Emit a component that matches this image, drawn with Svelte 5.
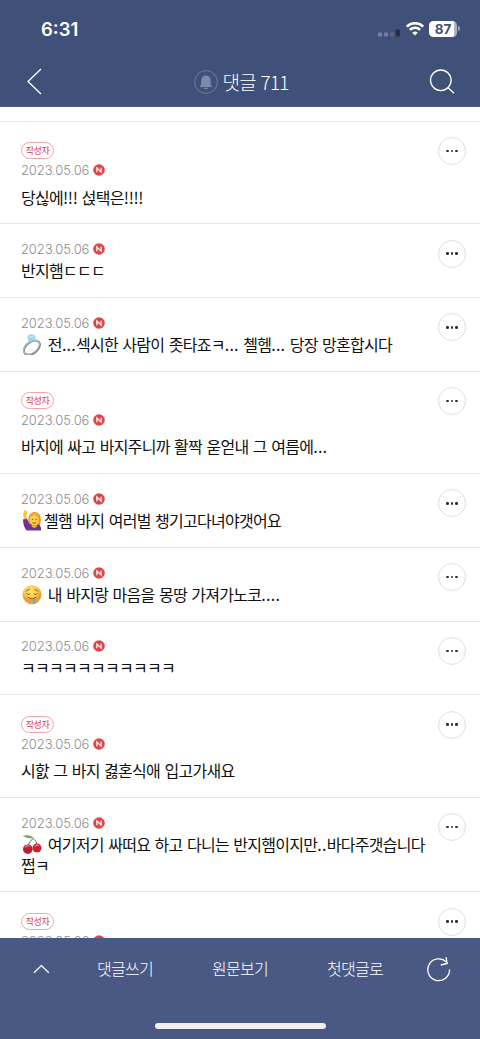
<script>
  const comments = [
    { author: true, text: '당싢에!!! 섡택은!!!!' },
    { text: '반지햄ㄷㄷㄷ' },
    { emoji: 'ring', text: ' 전...섹시한 사람이 좃타죠ㅋ... 첼헴... 당장 망혼합시다' },
    { author: true, text: '바지에 싸고 바지주니까 활짝 욷얻내 그 여름에...' },
    { emoji: 'woman', text: '첼햄 바지 여러벌 챙기고다녀야갯어요' },
    { emoji: 'drool', text: ' 내 바지랑 마음을 몽땅 가져가노코....' },
    { text: 'ㅋㅋㅋㅋㅋㅋㅋㅋㅋㅋㅋ' },
    { author: true, text: '시핤 그 바지 겷혼식애 입고가새요' },
    { emoji: 'cherry', text: ' 여기저기 싸떠요 하고 다니는 반지햄이지만..바다주갯습니다', more: '쩝ㅋ' },
    { author: true, text: '' }
  ];
  // Punctuation runs are set looser than the Hangul around them.
  const runs = (text) => text.split(/([.]+|!+)/).filter(Boolean);
</script>

<div class="screen">
  <header>
    <div class="status">
      <span class="time">6:31</span>
      <div class="indicators">
        <svg class="signal" width="22" height="8" viewBox="0 0 22 8">
          <rect x="0" y="3.5" width="4" height="4" rx="1" fill="#7381a4" />
          <rect x="6" y="3.5" width="4" height="4" rx="1" fill="#7381a4" />
          <rect x="12" y="3" width="4" height="4.5" rx="1" fill="#5c6580" />
          <rect x="17.8" y="0.5" width="4" height="7" rx="1" fill="#252b3d" />
        </svg>
        <svg class="wifi" width="18" height="14" viewBox="0 0 18 14" fill="none" stroke="#fff">
          <path d="M.8 4.6C5.5.1 12.5.1 17.2 4.6" stroke-width="2.6" />
          <path d="M3.8 7.8C6.8 5 11.2 5 14.2 7.8" stroke-width="2.4" />
          <path d="M9 13.6 6.2 10.8Q9 8.4 11.8 10.8Z" fill="#fff" stroke="none" />
        </svg>
        <span class="battery"><span>87</span></span>
        <span class="cap"></span>
      </div>
    </div>
    <div class="bar">
      <svg class="back" width="16" height="27" viewBox="0 0 16 27"><path d="M14 1 1 13.5 14 26" /></svg>
      <div class="title">
        <svg width="24" height="24" viewBox="0 0 24 24">
          <circle cx="12" cy="12" r="11.4" fill="none" stroke="#6e7ba0" />
          <path d="M12 5.4c-3 0-4.7 2-4.7 5v4.2L6 16.4v.5h12v-.5l-1.3-1.8v-4.2c0-3-1.7-5-4.7-5ZM9.9 17.7h4.2q-.6 1.5-2.1 1.5t-2.1-1.5Z" fill="#7d89a8" />
        </svg>
        <h1>댓글 711</h1>
      </div>
      <svg class="search" width="26" height="26" viewBox="0 0 26 26"><circle cx="11.8" cy="11.3" r="10.3" /><path d="m18.9 18.6 6.1 5.6" /></svg>
    </div>
  </header>

  <main>
    {#each comments as item}
      <article class:author={item.author} class:tall={item.more}>
        <div class="content">
          {#if item.author}<span class="badge">작성자</span>{/if}
          <div class="meta">
            <time>2023.05.06</time>
            <svg width="12" height="12" viewBox="0 0 12 12"><circle cx="6" cy="6" r="5.8" fill="#df464b" /><path d="M3.9 8.2V3.9L8.1 8.1V3.8" fill="none" stroke="#fff" stroke-width="1.2" /></svg>
          </div>
          <p>
            {#if item.emoji}
              <svg class="emoji" class:tight={item.emoji === 'woman'} width="20" height="21" viewBox="0 0 20 21">
                {#if item.emoji === 'ring'}
                  <ellipse cx="9.9" cy="13.6" rx="9" ry="5.7" transform="rotate(-38 9.9 13.6)" fill="none" stroke="#73787f" stroke-width="2" />
                  <ellipse cx="9.5" cy="13.1" rx="8.9" ry="5.5" transform="rotate(-38 9.5 13.1)" fill="none" stroke="#c2c5c9" stroke-width="1.2" />
                  <path d="m5.5 2.3 2-1.8h4l2 2-.8 3.5-3.2 2.2-3.3-2Z" fill="#8fc8e8" />
                  <path d="m7.5.6 2 2.7-3 2.6M11.5.6l-2 2.7 3 2.6M5.5 2.4l4 .9 4-.8" fill="none" stroke="#d8f3ff" stroke-width=".7" />
                {:else if item.emoji === 'woman'}
                  <path d="M6.5 15C5.5 7 7.5 2 12.5 2c5.6 0 7 5 6 11l-1 4H9Z" fill="#d99a2e" />
                  <path d="M1 9.5 4.6 8l2.6 5.6 4.3 2.2 5-1.4q2.6 1 2.6 6.2H4.8Q1.2 17 1 9.5Z" fill="#78308e" />
                  <path d="M2 9.6 1.2 4.3 2 .8l1-.6.8 1 1.2-.6.4 3.2-1.2 2 .3 3Z" fill="#f8c63b" />
                  <ellipse cx="12.2" cy="10" rx="4.6" ry="5.7" fill="#ffcf45" />
                  <path d="M7.3 10C7.6 6.5 10.5 6.6 13 4.6c.6 2 3 2.4 4 5.4.9-4.4-1-7.2-4.5-7.2-3.7 0-5.8 3-5.2 7.2Z" fill="#e8ad3c" />
                  <path d="M10 9.3h1.2M13.5 9.3h1.2M10.6 12.6q1.7 1.4 3.4 0" fill="none" stroke="#704719" />
                  <path d="M9.6 15v1.6q2.8 2.8 5.4 0V15q-2.7 1.5-5.4 0Z" fill="#e9ae31" />
                {:else if item.emoji === 'drool'}
                  <defs><radialGradient id="face" cx=".45" cy=".3"><stop offset="0" stop-color="#ffe772" /><stop offset=".7" stop-color="#fdc94a" /><stop offset="1" stop-color="#e8a038" /></radialGradient></defs>
                  <circle cx="10" cy="10.8" r="9.5" fill="url(#face)" />
                  <path d="M4.2 7.3q1.2-2 3-2M15.8 7.3q-1.2-2-3-2M4.8 9.8q1.5 1.3 3.2.2M12 10q1.7 1.1 3.2-.2M6.2 13.4q3.8 3.2 7.6 0" fill="none" stroke="#784818" stroke-width=".9" stroke-linecap="round" />
                  <path d="M10.2 15.3q2 .4 2.9-.9.8 2 1.3 3.2.2 2.3-1.8 2.3-2.2 0-1.6-2.4Z" fill="#61b7de" />
                {:else}
                  <path d="M5.5 12Q8 7.5 11 4.3M15.2 11.2Q14.5 6.5 11 4.3" fill="none" stroke="#7b7335" stroke-width="1" />
                  <path d="M1 2.1Q7-.5 11.8 4 6.5 5.2 1 2.1Z" fill="#5d9845" />
                  <path d="M1 2.1Q6 1.2 11.8 4" fill="none" stroke="#abc779" stroke-width=".6" />
                  <circle cx="5.8" cy="15.2" r="4.8" fill="#b91f37" />
                  <circle cx="15" cy="14" r="4.5" fill="#c82239" />
                  <path d="M3.5 13q1.5-1.8 3.5-.9M13.3 12q1.5-1.4 3-.6" fill="none" stroke="#f18492" stroke-width="1.2" stroke-linecap="round" />
                {/if}
              </svg>
            {/if}{#each runs(item.text) as run}<span class:dots={run[0] === '.'} class:marks={run[0] === '!'}>{run}</span>{/each}{#if item.more}<br />{item.more}{/if}
          </p>
        </div>
        <button aria-label="더보기"><i></i><i></i><i></i></button>
      </article>
    {/each}
  </main>

  <footer>
    <nav>
      <svg class="up" width="17" height="10" viewBox="0 0 17 10"><path d="m1 8.8 7.4-7.2 7.4 7.2" /></svg>
      <div class="links">
        <span>댓글쓰기</span>
        <span>원문보기</span>
        <span>첫댓글로</span>
      </div>
      <svg class="reload" width="24" height="26" viewBox="0 0 24 26"><path d="M22.6 13.5A10.9 10.9 0 1 1 19.4 6M19 1l1.2 6.4L13.8 9" /></svg>
    </nav>
    <div class="home"></div>
  </footer>
</div>

<style>
  :global(body) { margin: 0; }
  .screen {
    width: 480px; height: 1039px; display: flex; flex-direction: column; overflow: hidden;
    background: #fff; color: #101010; font-family: 'Noto Sans CJK KR', sans-serif;
  }
  header { flex: 0 0 107px; box-sizing: border-box; background: #3f5178; border-bottom: 1px solid #4a5b87; }
  .status { height: 57px; padding: 0 20px 0 41px; display: flex; justify-content: space-between; align-items: center; box-sizing: border-box; }
  .time { font: 600 18.5px Inter, sans-serif; color: #fff; }
  .indicators { display: flex; align-items: center; }
  .signal { margin-right: 6px; margin-top: 8px; }
  .wifi { margin-right: 5px; }
  .battery { width: 28px; height: 16px; border-radius: 4.5px; background: linear-gradient(90deg, #fff 25px, #aab3c7 25px); display: flex; align-items: center; }
  .battery span { width: 28px; text-align: center; font: 700 13.5px/16px Inter, sans-serif; color: #3f5178; }
  .cap { width: 2px; height: 5px; margin-left: 1px; border-radius: 0 2px 2px 0; background: #9aa5bd; }
  .bar { height: 49px; padding: 0 25px 0 27px; display: flex; justify-content: space-between; align-items: center; }
  .back, .search, .up, .reload { fill: none; stroke: #fff; stroke-width: 1.3; }
  .title { display: flex; align-items: center; gap: 5px; margin-left: 10px; }
  h1 { margin: 0; font-size: 19px; line-height: 28px; font-weight: 300; letter-spacing: -0.9px; word-spacing: 1.6px; color: #fff; }
  main { flex: 1; min-height: 0; overflow: hidden; padding-top: 14px; }
  article {
    height: 73.7px; box-sizing: border-box; border-top: 1px solid #e6e6e6; padding: 15.3px 14px 0 21px;
    display: flex; justify-content: space-between; align-items: flex-start;
  }
  article.author { height: 102.4px; }
  article.tall { height: 94.6px; }
  .content { padding-top: .6px; white-space: nowrap; }
  .author .content { padding-top: 5px; }
  .badge {
    display: flex; align-items: center; justify-content: center; width: 33px; height: 17px; box-sizing: border-box;
    border: 1px solid #efa6a9; border-radius: 9px; font-size: 9px; line-height: 15px; font-weight: 400; letter-spacing: -0.5px; color: #dc4047;
  }
  .meta { display: flex; align-items: center; gap: 4px; height: 18px; }
  .author .meta { margin-top: 2px; }
  time { font: 300 13px/18px Inter, sans-serif; letter-spacing: -0.12px; color: #8c8c8c; width: 68px; }
  p { margin: 2px 0 0; font-size: 16px; line-height: 21px; letter-spacing: -0.72px; word-spacing: 1.5px; white-space: pre-line; }
  .author p { margin-top: 7.4px; }
  .dots { letter-spacing: 0.25px; }
  .marks { letter-spacing: -0.35px; }
  .emoji { vertical-align: -4px; margin: 0 1.5px 0 1px; }
  .emoji.tight { margin-right: 2px; }
  button {
    flex: none; width: 28px; height: 28px; padding: 0; border: 1px solid #dedede; border-radius: 50%; background: #fff;
    display: flex; align-items: center; justify-content: center; gap: 2px;
  }
  i { width: 2.4px; height: 2.4px; border-radius: 1.2px; background: #333; }
  footer { flex: 0 0 101px; background: #495984; display: flex; flex-direction: column; align-items: center; justify-content: space-between; }
  nav { width: 100%; height: 62px; box-sizing: border-box; padding: 0 29px 0 33px; display: flex; align-items: center; justify-content: space-between; }
  .links { display: flex; gap: 59px; margin: -2px 0 0 3px; }
  .links span { font-size: 16px; font-weight: 300; letter-spacing: -0.72px; color: #fff; }
  .home { width: 171px; height: 6px; border-radius: 3px; background: #efefef; margin-bottom: 10px; }
</style>
